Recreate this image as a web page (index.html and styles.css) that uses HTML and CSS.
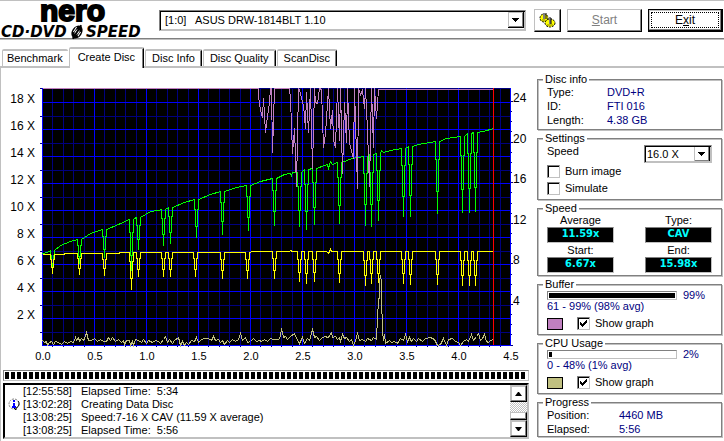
FILE: index.html
```html
<!DOCTYPE html>
<html lang="en">
<head>
    <meta charset="UTF-8">
    <meta name="viewport" content="width=device-width, initial-scale=1.0">
    <title>Nero CD-DVD Speed</title>
    <link rel="stylesheet" href="styles.css">
</head>
<body>
    <header class="toolbar">
        <svg class="logo" width="148" height="37" viewBox="0 0 148 37" role="img" aria-label="nero CD-DVD SPEED">
            <text class="logo-nero" x="40" y="19">nero</text>
            <text class="logo-sub" x="1" y="35">CD·DVD</text>
            <text class="logo-sub" x="86" y="35">SPEED</text>
            <g transform="rotate(32 77 30)">
                <ellipse cx="77" cy="30" rx="5" ry="7"/>
                <ellipse cx="77" cy="30" rx="2" ry="3" fill="#fff"/>
                <path d="M77 22v16" stroke="#000" stroke-width="2"/>
                <path d="M74 26v6M80 28v5" stroke="#fff" stroke-width="1"/>
            </g>
        </svg>
        <select class="combo drive" aria-label="Drive">
            <option>[1:0]&nbsp;&nbsp; ASUS DRW-1814BLT 1.10</option>
        </select>
        <button class="btn btn-icon" aria-label="Disc options">
            <svg width="17" height="17" viewBox="0 0 17 17">
                <ellipse cx="5" cy="6" rx="4" ry="4" fill="#ff0" stroke="#000" stroke-dasharray="2 1"/>
                <path d="M5 1v6" stroke="#808080" stroke-width="2"/>
                <path d="M7 1v6" stroke="#000"/>
                <path d="M3 8h3" stroke="#808000"/>
                <ellipse cx="11" cy="11" rx="5" ry="4" fill="#ff0" stroke="#000" stroke-dasharray="2 1"/>
                <path d="M11 5v7" stroke="#808080" stroke-width="2"/>
                <path d="M12 6v6" stroke="#000"/>
                <path d="M8 13h6" stroke="#808000"/>
            </svg>
        </button>
        <button class="btn" disabled><u>S</u>tart</button>
        <button class="btn btn-default"><span>E<u>x</u>it</span></button>
    </header>

    <nav class="tabs" role="tablist">
        <button class="tab" role="tab">Benchmark</button>
        <button class="tab active" role="tab" aria-selected="true">Create Disc</button>
        <button class="tab" role="tab">Disc Info</button>
        <button class="tab" role="tab">Disc Quality</button>
        <button class="tab" role="tab">ScanDisc</button>
    </nav>

    <main class="page">
        <section class="left">
            <svg id="chart" class="chart" viewBox="3 68 526 300" role="img" aria-label="Write speed graph"></svg>
            <progress class="write-progress" value="100" max="100" aria-label="Write progress"></progress>
            <div class="log">
                <ul class="log-lines">
                    <li><i></i><time>[12:55:58]</time><span>Elapsed Time:&nbsp; 5:34</span></li>
                    <li><i><svg width="13" height="13" viewBox="0 0 13 13">
                            <circle cx="6" cy="6" r="5" fill="#fff" stroke="#808080" stroke-dasharray="2 1"/>
                            <path d="M10 3c2 2 1 6-2 7v2l-2-2" fill="none" stroke="#000"/>
                            <path d="M6 2v2M6 5v4M4 9h4" stroke="#00f" stroke-width="2"/>
                        </svg></i><time>[13:02:28]</time><span>Creating Data Disc</span></li>
                    <li><i></i><time>[13:08:25]</time><span>Speed:7-16 X CAV (11.59 X average)</span></li>
                    <li><i></i><time>[13:08:25]</time><span>Elapsed Time:&nbsp; 5:56</span></li>
                </ul>
                <div class="scrollbar">
                    <button class="scroll-btn" aria-label="Scroll up"><svg width="7" height="4" viewBox="0 0 7 4"><path d="M0 4h7L4 0H3z"/></svg></button>
                    <div class="track"><div class="thumb"></div></div>
                    <button class="scroll-btn" aria-label="Scroll down"><svg width="7" height="4" viewBox="0 0 7 4"><path d="M0 0h7L4 4H3z"/></svg></button>
                </div>
            </div>
        </section>

        <aside class="side">
            <fieldset>
                <legend>Disc info</legend>
                <dl class="info">
                    <dt>Type:</dt><dd>DVD+R</dd>
                    <dt>ID:</dt><dd>FTI 016</dd>
                    <dt>Length:</dt><dd>4.38 GB</dd>
                </dl>
            </fieldset>

            <fieldset>
                <legend>Settings</legend>
                <div class="speed-row">
                    <label for="speed">Speed</label>
                    <select id="speed" class="combo speed"><option>16.0 X</option></select>
                </div>
                <label class="check"><input type="checkbox">Burn image</label>
                <label class="check"><input type="checkbox">Simulate</label>
            </fieldset>

            <fieldset>
                <legend>Speed</legend>
                <div class="readouts">
                    <span>Average</span><span>Type:</span>
                    <output>11.59x</output><output>CAV</output>
                    <span>Start:</span><span>End:</span>
                    <output>6.67x</output><output>15.98x</output>
                </div>
            </fieldset>

            <fieldset>
                <legend>Buffer</legend>
                <div class="meter-row"><progress class="meter" value="100" max="100" aria-label="Buffer"></progress><span>99%</span></div>
                <p class="range">61 - 99% (98% avg)</p>
                <div class="graph-row">
                    <span class="swatch buffer"></span>
                    <label class="check"><input type="checkbox" checked>Show graph</label>
                </div>
            </fieldset>

            <fieldset>
                <legend>CPU Usage</legend>
                <div class="meter-row"><progress class="meter" value="2" max="100" aria-label="CPU usage"></progress><span>2%</span></div>
                <p class="range">0 - 48% (1% avg)</p>
                <div class="graph-row">
                    <span class="swatch cpu"></span>
                    <label class="check"><input type="checkbox" checked>Show graph</label>
                </div>
            </fieldset>

            <fieldset>
                <legend>Progress</legend>
                <dl class="info wide">
                    <dt>Position:</dt><dd>4460 MB</dd>
                    <dt>Elapsed:</dt><dd>5:56</dd>
                </dl>
            </fieldset>
        </aside>
    </main>
    <script src="chart.js"></script>
</body>
</html>
```
FILE: styles.css
```css
* {
    box-sizing: border-box;
}

body {
    margin: 0;
    min-height: 100vh;
    display: flex;
    flex-direction: column;
    background: #fff;
    color: #000;
    font-family: "Liberation Sans", Arial, sans-serif;
    font-size: 11px;
    line-height: 13px;
}

button, select, input {
    font: inherit;
    color: inherit;
    margin: 0;
}

/* toolbar */
.toolbar {
    display: flex;
    align-items: center;
    gap: 6px;
    height: 40px;
    padding: 0 1px 0 0;
    border-top: 1px solid #c0c0c0;
    border-bottom: 1px solid #c0c0c0;
    box-shadow: inset 0 -1px 0 #808080;
}

.logo {
    margin-right: 5px;
    overflow: visible;
}

.logo-nero {
    font-family: "Liberation Sans", Arial, sans-serif;
    font-size: 30px;
    font-weight: bold;
    stroke: #000;
    stroke-width: 2px;
}

.logo-sub {
    font-family: "DejaVu Sans", sans-serif;
    font-size: 15px;
    font-weight: bold;
    font-style: oblique;
}

.combo {
    appearance: none;
    border: 1px solid;
    border-color: #808080 #c0c0c0 #c0c0c0 #808080;
    border-radius: 0;
    box-shadow: inset 1px 1px 0 #000, inset -1px -1px 0 #c0c0c0;
    background: #fff url("data:image/svg+xml,%3Csvg xmlns='http://www.w3.org/2000/svg' width='16' height='16' shape-rendering='crispEdges'%3E%3Cpath fill='%23000' d='M0 0h16v16H0z'/%3E%3Cpath fill='%23c0c0c0' d='M0 0h15v15H0z'/%3E%3Cpath fill='%23808080' d='M1 1h14v14H1z'/%3E%3Cpath fill='%23fff' d='M1 1h13v13H1z'/%3E%3Cpath d='M4 6h7v1h-1v1H9v1H8v1H7V9H6V8H5V7H4z'/%3E%3C/svg%3E") no-repeat right 1px center;
    padding: 0 18px 0 5px;
}

.drive {
    flex: 1;
    height: 21px;
    margin-right: 2px;
}

.btn {
    width: 75px;
    height: 23px;
    padding: 0;
    background: #fff;
    border: 1px solid;
    border-color: #c0c0c0 #000 #000 #c0c0c0;
    box-shadow: inset -1px -1px 0 #808080;
    font-size: 12px;
}

.btn:disabled {
    color: #808080;
}

.btn-icon {
    width: 27px;
    display: flex;
    align-items: center;
    justify-content: center;
}

.btn-default {
    border: 1px solid #000;
    padding: 2px;
    box-shadow: inset -1px -1px 0 #000, inset -2px -2px 0 #808080, inset 1px 1px 0 #c0c0c0;
}

.btn-default span {
    display: block;
    margin: 0 1px 1px 0;
    border: 1px dotted #000;
    line-height: 14px;
}

/* tabs */
.tabs {
    display: flex;
    align-items: flex-end;
    gap: 1px;
    height: 28px;
    padding-left: 2px;
    border-bottom: 2px solid #c0c0c0;
}

.tab {
    height: 17px;
    padding: 0 6px;
    background: #fff;
    border: solid;
    border-width: 2px 1px 0 1px;
    border-color: #c0c0c0 #000 #c0c0c0 #c0c0c0;
    border-radius: 2px 2px 0 0;
    box-shadow: inset -1px 0 0 #808080;
    white-space: nowrap;
}

.tab:first-child {
    border-right-width: 0;
    padding: 0 5px 0 4px;
    box-shadow: none;
}

.tab.active {
    height: 21px;
    margin-bottom: -2px;
    padding: 0 8px 3px;
}

/* page */
.page {
    flex: 1;
    display: flex;
    gap: 8px;
    padding: 0 2px 2px;
    border-left: 1px solid #c0c0c0;
}

.left {
    flex: 1;
    min-width: 0;
}

.chart {
    display: block;
    width: 100%;
    shape-rendering: crispEdges;
    font-size: 12px;
}

.chart polyline {
    fill: none;
    stroke-width: 1;
}

.major { fill: #00f; }
.minor { fill: #000080; }
.series-buffer { stroke: #c080c0; }
.series-speed { stroke: #0f0; }
.series-rpm { stroke: #ff0; }
.series-cpu { stroke: #c0c080; }
.cursor { fill: #f00; }

.x-label {
    font-size: 11px;
    text-anchor: middle;
}

.y-label {
    text-anchor: end;
}

progress {
    appearance: none;
    display: block;
    background: #fff;
    border: 1px solid;
    border-color: #808080 #c0c0c0 #c0c0c0 #808080;
}

progress::-webkit-progress-bar {
    background: #fff;
}

.write-progress {
    width: 100%;
    height: 11px;
    margin: 2px 0;
    padding: 1px;
}

.write-progress::-webkit-progress-value {
    background: repeating-linear-gradient(to right, #000 0, #000 4px, #fff 4px, #fff 6px);
}

.log {
    display: flex;
    height: 56px;
    border: 2px solid;
    border-color: #000 #c0c0c0 #c0c0c0 #000;
    box-shadow: inset 1px 0 0 #fff;
}

.log-lines {
    flex: 1;
    margin: 0;
    padding: 0 0 0 3px;
    list-style: none;
    overflow: hidden;
}

.log-lines li {
    display: grid;
    grid-template-columns: 15px 58px 1fr;
    height: 13px;
}

.log-lines svg {
    display: block;
}

.scrollbar {
    display: flex;
    flex-direction: column;
    width: 17px;
}

.scroll-btn {
    display: flex;
    align-items: center;
    justify-content: center;
    height: 17px;
    padding: 0;
    background: #fff;
    border: 1px solid;
    border-color: #c0c0c0 #000 #000 #c0c0c0;
    box-shadow: inset -1px -1px 0 #808080, inset 1px 1px 0 #c0c0c0;
}

.track {
    flex: 1;
    display: flex;
    flex-direction: column;
    justify-content: flex-end;
    background: repeating-conic-gradient(#c0c0c0 0 25%, #fff 0 50%) 0 0 / 2px 2px;
}

.thumb {
    height: 8px;
    background: #fff;
    border: 1px solid;
    border-color: #c0c0c0 #000 #000 #c0c0c0;
    box-shadow: inset -1px -1px 0 #808080;
}

/* side panels */
.side {
    flex: 0 0 185px;
    display: flex;
    flex-direction: column;
    gap: 2px;
    padding-top: 5px;
}

fieldset {
    min-width: 0;
    margin: 0;
    padding: 0 9px 2px;
    border: 1px solid #808080;
    box-shadow: 1px 1px 0 #c0c0c0, inset 1px 1px 0 #c0c0c0;
}

fieldset:last-child {
    padding-bottom: 0;
}

legend {
    margin-left: -4px;
    padding: 0 2px;
    line-height: 12px;
    background: #fff;
}

.info {
    display: grid;
    grid-template-columns: 60px 1fr;
    margin: 0;
    line-height: 14px;
}

.info.wide {
    grid-template-columns: 72px 1fr;
}

.info dd {
    margin: 0;
    color: #000080;
}

.speed-row {
    display: flex;
    justify-content: space-between;
    margin-top: 1px;
}

.speed {
    width: 68px;
    height: 18px;
    padding-left: 2px;
}

.check {
    display: flex;
    align-items: center;
    gap: 5px;
    height: 17px;
}

.check input {
    appearance: none;
    width: 13px;
    height: 13px;
    border: 1px solid;
    border-color: #808080 #c0c0c0 #c0c0c0 #808080;
    box-shadow: inset 1px 1px 0 #000;
}

.check input:checked {
    background: url("data:image/svg+xml,%3Csvg xmlns='http://www.w3.org/2000/svg' width='7' height='7' shape-rendering='crispEdges'%3E%3Cpath d='M0 2h1v1h1v1h1V3h1V2h1V1h1V0h1v3H6v1H5v1H4v1H3v1H2V6H1V5H0z'/%3E%3C/svg%3E") no-repeat center;
}

.readouts {
    display: grid;
    grid-template-columns: 67px 67px;
    justify-content: space-between;
    row-gap: 1px;
    text-align: center;
    line-height: 12px;
}

.readouts output {
    height: 16px;
    background: #000;
    border: 1px solid;
    border-color: #808080 #c0c0c0 #c0c0c0 #808080;
    color: #0ff;
    font-family: "DejaVu Sans Condensed", "DejaVu Sans", sans-serif;
    font-weight: bold;
}

.meter-row {
    display: flex;
    align-items: center;
    gap: 6px;
    height: 10px;
    color: #000080;
}

.meter {
    width: 130px;
    height: 9px;
    padding: 1px;
}

.meter::-webkit-progress-value {
    background: #000;
}

.range {
    margin: 0;
    color: #000080;
}

.graph-row {
    display: flex;
    align-items: center;
    gap: 14px;
    margin-top: 2px;
}

.swatch {
    width: 16px;
    height: 12px;
    border: 1px solid #000;
}

.swatch.buffer { background: #c080c0; }
.swatch.cpu { background: #c0c080; }
```
FILE: chart.js
```js
const chart = document.getElementById('chart');
const LEFT = 42, RIGHT = 510, TOP = 88, BOTTOM = 345;

function add(tag, attrs, text) {
    const el = document.createElementNS('http://www.w3.org/2000/svg', tag);
    for (const key in attrs) el.setAttribute(key, attrs[key]);
    if (text) el.textContent = text;
    chart.appendChild(el);
}

function rect(x, y, width, height, cls) {
    add('rect', { x, y, width, height, class: cls });
}

function series(points, cls) {
    add('polyline', { points: points.map(p => (p[0] + 0.5) + ',' + (p[1] + 0.5)).join(' '), class: cls });
}

// expands [x, y, bottom] entries into a narrow drop around x
function withDips(points) {
    const out = [];
    points.forEach(p => {
        if (p.length < 3) {
            out.push(p);
            return;
        }
        const [x, y, low] = p;
        const a = y + (low - y) * 0.25;
        const b = y + (low - y) * 0.7;
        out.push([x - 2, y], [x - 2, a], [x - 1, a], [x - 1, b], [x, b], [x, low], [x, b], [x + 1, b], [x + 1, a], [x + 2, a], [x + 2, y]);
    });
    return out;
}

function drawGrid() {
    rect(LEFT, TOP, RIGHT - LEFT + 1, BOTTOM - TOP + 1, 'plot');
    for (let i = 0; i <= 45; i++) {
        const x = LEFT + Math.round(i * 10.4);
        if (i % 5) rect(x, TOP, 1, BOTTOM - TOP + 2, 'minor');
    }
    for (let y = 116; y < BOTTOM; y += 27) rect(40, y, RIGHT - 40, 1, 'minor');
    rect(40, TOP, RIGHT - 40, 1, 'minor');
    for (let y = 102; y <= BOTTOM; y += 27) rect(LEFT, y, RIGHT - LEFT + 1, 1, 'major');
    for (let i = 0; i <= 9; i++) rect(LEFT + i * 52, TOP, 1, BOTTOM - TOP + 1, 'major');
    for (let i = 0; i < 25; i++) rect(511, Math.round(101 + i * 10.15), i % 4 ? 1 : 2, 1, 'minor');
}

function drawLabels() {
    for (let i = 0; i < 9; i++) {
        add('text', { x: 35, y: 103 + i * 27, class: 'y-label' }, (18 - i * 2) + ' X');
    }
    for (let i = 0; i < 6; i++) {
        add('text', { x: 513, y: Math.round(102 + i * 40.5) }, String(24 - i * 4));
    }
    for (let i = 0; i <= 9; i++) {
        add('text', { x: 43 + i * 52, y: 360, class: 'x-label' }, (i / 2).toFixed(1));
    }
}

const buffer = [[42, 88], [258, 88], [258, 94], [259, 104], [261, 114], [262, 116], [263, 98], [265, 132], [267, 116],
    [269, 102], [270, 88], [271, 88], [272, 152], [274, 88], [289, 88], [290, 98], [292, 153], [294, 128], [296, 186],
    [298, 88], [299, 89], [301, 98], [303, 105], [305, 128], [306, 92], [308, 132], [310, 88], [312, 168], [314, 88],
    [315, 102], [317, 103], [319, 88], [321, 89], [323, 147], [325, 133], [328, 88], [330, 128], [332, 110],
    [333, 140], [335, 147], [337, 88], [339, 140], [340, 88], [342, 173], [344, 102], [346, 142], [347, 88],
    [349, 143], [353, 158], [354, 88], [357, 188], [358, 88], [360, 94], [362, 90], [364, 108], [365, 88],
    [367, 130], [369, 186], [371, 88], [373, 147], [374, 88], [376, 118], [378, 89], [493, 89]];

const speed = [[42, 253], [47, 252], [52, 250, 269], [60, 245], [70, 241], [79, 239, 263], [90, 233], [104, 229, 257],
    [118, 224], [131, 219, 270], [134, 218], [138, 217, 249], [150, 211], [158, 210], [163, 209, 245],
    [170, 207, 243], [184, 202], [196, 199, 237], [210, 194], [222, 191, 234], [236, 187], [248, 185, 230],
    [260, 181], [274, 178, 225], [284, 174], [290, 173], [291, 175], [292, 172], [299, 172, 226], [306, 169, 229],
    [314, 168, 224], [324, 165], [327, 164], [328, 168], [330, 161], [332, 164], [339, 162, 223], [352, 158],
    [365, 156, 225], [371, 154, 226], [378, 153, 220], [381, 150], [383, 152], [390, 150], [403, 148, 216],
    [410, 146, 216], [418, 144], [437, 141, 213], [446, 138], [462, 136, 212], [469, 133, 212], [475, 132, 211],
    [483, 131], [493, 128]];

const rpm = [[42, 254], [52, 254, 273], [64, 254], [64, 253], [79, 253, 274], [104, 253, 275], [119, 253], [119, 252],
    [131, 252, 289], [138, 252, 276], [163, 252, 276], [170, 252, 276], [195, 252, 276], [222, 252, 278],
    [247, 252, 278], [252, 251], [274, 251, 278], [289, 251], [290, 250], [292, 251], [299, 251, 281],
    [306, 251, 283], [314, 251, 281], [326, 251], [328, 253], [330, 249], [331, 251], [339, 251, 282],
    [365, 251, 285], [371, 251, 283], [378, 251, 282], [403, 251, 283], [410, 251, 284], [437, 251, 284],
    [462, 251, 285], [469, 251, 285], [475, 251, 285], [493, 251]];

const cpu = [[42, 340], [44, 342], [46, 341], [47, 345], [49, 342], [51, 341], [53, 344], [55, 341], [58, 342], [61, 344],
    [64, 341], [67, 343], [70, 341], [73, 342], [75, 337], [76, 340], [78, 337], [79, 341], [81, 338], [83, 340],
    [84, 338], [86, 332], [88, 340], [91, 340], [94, 338], [97, 341], [100, 339], [103, 341], [106, 341],
    [108, 337], [110, 340], [112, 337], [115, 341], [118, 339], [121, 342], [123, 340], [124, 344], [126, 340],
    [129, 340], [130, 345], [132, 341], [133, 345], [135, 339], [138, 340], [141, 342], [143, 339], [146, 343],
    [148, 340], [152, 342], [155, 340], [158, 341], [160, 343], [163, 339], [165, 336], [167, 342], [169, 339],
    [172, 343], [174, 340], [178, 337], [180, 345], [182, 341], [184, 345], [186, 342], [188, 344], [191, 340],
    [194, 341], [196, 337], [198, 342], [201, 339], [204, 338], [208, 338], [211, 340], [213, 336], [215, 340],
    [218, 339], [220, 342], [222, 340], [224, 344], [227, 340], [229, 342], [232, 339], [235, 341], [238, 339],
    [240, 333], [242, 340], [245, 337], [247, 342], [250, 341], [253, 338], [256, 341], [259, 340], [261, 341],
    [264, 339], [267, 341], [270, 338], [273, 339], [278, 339], [280, 336], [281, 328], [283, 337], [285, 336],
    [287, 339], [290, 336], [294, 333], [296, 338], [299, 343], [302, 337], [304, 343], [307, 338], [309, 340],
    [312, 329], [314, 337], [316, 336], [319, 340], [321, 338], [324, 336], [328, 337], [331, 332], [332, 337],
    [335, 336], [337, 339], [339, 337], [340, 341], [342, 334], [344, 338], [346, 337], [349, 341], [351, 339],
    [353, 345], [355, 340], [357, 333], [359, 340], [362, 339], [365, 341], [367, 338], [371, 340], [373, 337],
    [376, 339], [377, 317], [378, 300], [379, 296], [379, 280], [380, 275], [381, 282], [381, 295], [382, 331],
    [383, 340], [384, 334], [385, 343], [389, 340], [391, 342], [394, 341], [397, 343], [400, 338], [403, 340],
    [405, 334], [407, 341], [409, 337], [411, 341], [413, 338], [416, 341], [418, 338], [422, 341], [425, 338],
    [430, 337], [434, 339], [437, 345], [440, 344], [443, 338], [446, 345], [448, 339], [452, 338], [455, 341],
    [458, 342], [460, 345], [463, 341], [466, 339], [468, 341], [471, 334], [473, 340], [476, 336], [478, 333],
    [480, 340], [482, 338], [484, 334], [486, 341], [488, 342], [490, 340], [493, 339]];

drawGrid();
series(withDips(speed), 'series-speed');
series(buffer, 'series-buffer');
series(withDips(rpm), 'series-rpm');
series(cpu, 'series-cpu');
rect(493, TOP, 1, BOTTOM - TOP, 'cursor');
drawLabels();
```
